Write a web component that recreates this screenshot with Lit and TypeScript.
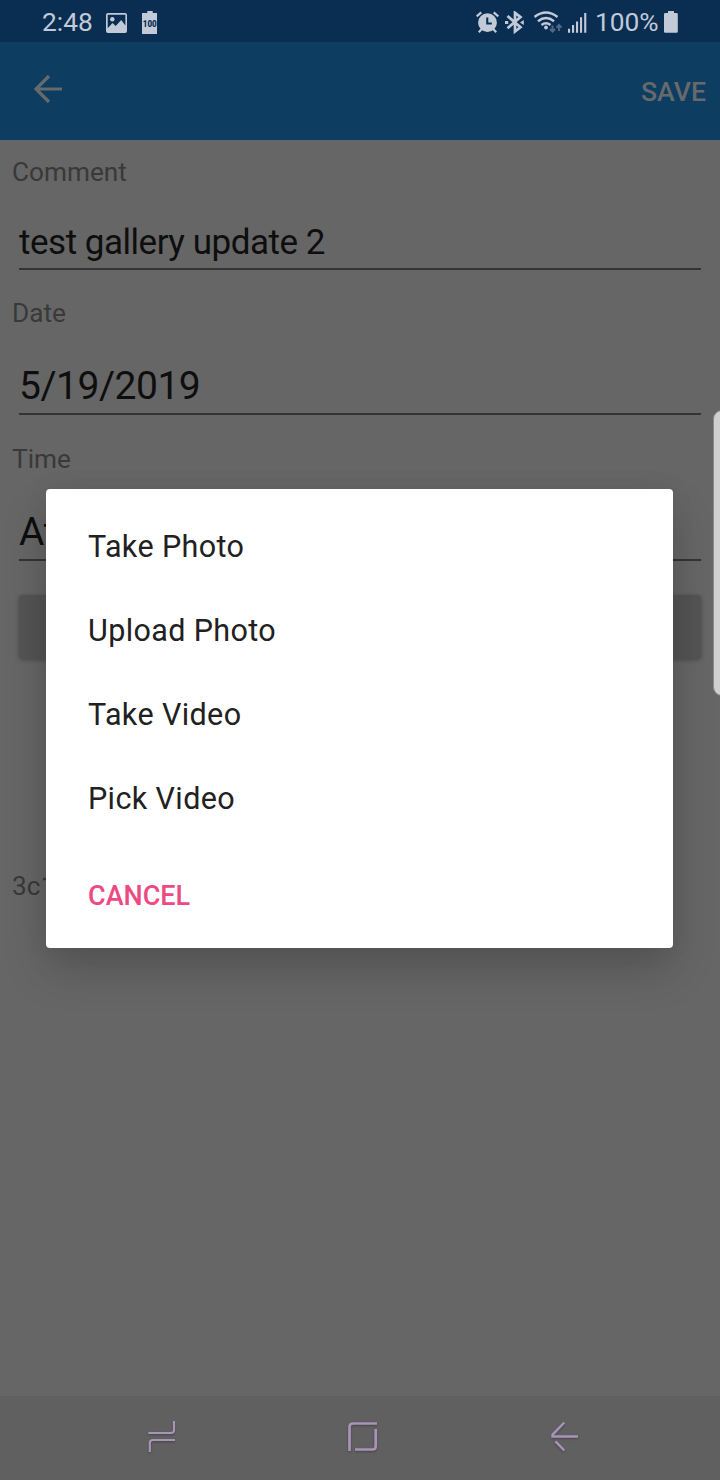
import { LitElement, html, css } from "lit";
import { customElement } from "lit/decorators.js";

@customElement("status-bar")
class StatusBar extends LitElement {
  static styles = css`
    :host { display: block; }
    .bar {
      height: 42px; box-sizing: border-box; padding: 0 41px 0 42px;
      display: flex; align-items: center; justify-content: space-between;
      background: #0a2e52; color: #c2cad8; fill: #c2cad8;
      font: 26.300px/40px Roboto, sans-serif;
    }
    .group { display: flex; align-items: center; height: 42px; padding-top: 4px; box-sizing: border-box; }
    .time { width: 63px; height: 42px; }
    .percent { width: 68px; height: 42px; }
    svg { display: block; flex: none; }
    .picture { margin-right: 14px; }
    .tiny { font: 900 9.500px Roboto, sans-serif; fill: #0a2e52; }
  `;
  render() {
    return html`<div class="bar">
      <div class="group">
        <span class="time">2:48</span>
        <svg class="picture" width="23" height="22" viewBox="0 0 23 22">
          <path fill-rule="evenodd" d="M3 1h17a2 2 0 0 1 2 2v16a2 2 0 0 1-2 2H3a2 2 0 0 1-2-2V3a2 2 0 0 1 2-2zm-.3 1.800v13.500l4.800-5.300 3.200 3 5.500-6 4.200 5.500V2.800z"/>
          <circle cx="7.300" cy="7.300" r="2.200"/>
        </svg>
        <svg width="16" height="24" viewBox="0 0 16 24">
          <path d="M5.300 0h5.400v2h4.300v21H0V2h5.300z"/>
          <text class="tiny" x="0.800" y="15.800" textLength="14" lengthAdjust="spacingAndGlyphs">100</text>
        </svg>
      </div>
      <div class="group">
        <svg width="29" height="24" viewBox="476 10 29 24">
          <path fill-rule="evenodd" d="M487.500 12.300a9.400 9.400 0 1 1 0 18.800a9.400 9.400 0 0 1 0-18.800zm-1.300 4.200v7h5.600v-2h-3.500v-5z"/>
          <path fill="none" stroke="#c2cad8" stroke-width="2.200" d="M476.700 15.300l4.600-3.900M498.300 15.300l-4.600-3.900M481.800 28l-3 3.200M493.200 28l3 3.200"/>
        </svg>
        <svg width="29" height="24" viewBox="505 10 29 24">
          <path fill="none" stroke="#c2cad8" stroke-width="2.700" d="M507.500 15L520.500 26.200l-5.500 4.300V11.800l5.500 4.300L507.500 27.200"/>
          <path d="M505 20h3.200v3H505zM520 21.500l3.800-2.500v5z"/>
        </svg>
        <svg width="33" height="24" viewBox="534 10 33 24">
          <g fill="none" stroke="#c2cad8" stroke-width="2.400">
            <path d="M534.500 16q11.500-9 23 0M538 20.200q8-6.300 16 0M541.500 24q4.500-3.500 9 0"/>
          </g>
          <circle cx="546" cy="26.500" r="1.900"/>
          <path fill="none" stroke="#52698a" stroke-width="1.900" d="M552.500 24.500v6M550 28l2.500 2.700 2.500-2.700M559 30v-6M556.500 26.700l2.500-2.700 2.500 2.700"/>
        </svg>
        <svg width="28" height="24" viewBox="567 10 28 24">
          <path d="M568 27.700h2.100v4.100H568zM572 24h2.100v7.800H572zM576 20.500h2.100v11.300H576zM580 16.300h2.100v15.500H580zM584.200 12h2.100v19.800h-2.100z"/>
        </svg>
        <span class="percent">100%</span>
        <svg width="16" height="24" viewBox="0 0 16 24">
          <path d="M5 0h6v2h2.500a1.300 1.300 0 0 1 1.300 1.300V20.500a1.300 1.300 0 0 1-1.300 1.300h-11A1.300 1.300 0 0 1 1 20.500V3.300A1.300 1.300 0 0 1 2.300 2H5z"/>
        </svg>
      </div>
    </div>`;
  }
}

@customElement("app-header")
class AppHeader extends LitElement {
  static styles = css`
    :host { display: block; }
    .bar {
      height: 98px; box-sizing: border-box; padding: 0 14px 0 33px;
      display: flex; align-items: center; justify-content: space-between;
      background: #0d3d60; color: #666a6d;
      font: 500 26.700px/30px Roboto, sans-serif;
    }
    svg { display: block; margin-bottom: 4px; }
    .save { padding-top: 1px; }
  `;
  render() {
    return html`<div class="bar">
      <svg width="30" height="30" viewBox="0 0 30 30" fill="none" stroke="#666a6d" stroke-width="3.200">
        <path d="M29 15H3M16 2L3 15l13 13"/>
      </svg>
      <span class="save">SAVE</span>
    </div>`;
  }
}

@customElement("form-field")
class FormField extends LitElement {
  static properties = { label: {}, value: {}, large: { type: Boolean } };
  declare label: string;
  declare value: string;
  declare large: boolean;
  static styles = css`
    :host { display: block; font-family: Roboto, sans-serif; }
    .label { font-size: 26.200px; line-height: 30px; color: #393939; padding-left: 12px; }
    .value {
      margin: 30px 19px 0; height: 53px; box-sizing: border-box;
      border-bottom: 2px solid #343434; color: #0e0e0e;
      font-size: 35px; line-height: 51px; letter-spacing: -.48px; white-space: nowrap; overflow: hidden;
    }
    .large { height: 57px; margin-bottom: 1px; font-size: 39px; line-height: 56px; letter-spacing: -.48px; }
  `;
  render() {
    return html`<div class="label">${this.label}</div>
      <div class="value ${this.large ? "large" : ""}">${this.value}</div>`;
  }
}

@customElement("action-sheet")
class ActionSheet extends LitElement {
  static styles = css`
    :host {
      display: block; box-sizing: border-box; width: 627px; height: 459px;
      padding: 16px 42px 0; background: #fff; border-radius: 4px;
      box-shadow: 0 22px 44px rgba(0, 0, 0, .18), 0 0 26px rgba(0, 0, 0, .06);
      font-family: Roboto, sans-serif;
    }
    .item { height: 84px; line-height: 84px; font-size: 30.500px; letter-spacing: .38px; color: #212121; }
    .cancel { margin-top: 24px; line-height: 62px; font-size: 27px; font-weight: 500; color: #ec4a82; }
  `;
  render() {
    const items = ["Take Photo", "Upload Photo", "Take Video", "Pick Video"];
    return html`${items.map((t) => html`<div class="item">${t}</div>`)}
      <div class="cancel">CANCEL</div>`;
  }
}

@customElement("nav-bar")
class NavBar extends LitElement {
  static styles = css`
    :host { display: block; }
    .bar {
      height: 84px; box-sizing: border-box; background: #606060; padding: 0 140px 4px 146px;
      display: flex; align-items: center; justify-content: space-between;
    }
    svg { display: block; fill: none; stroke: #a993b9; stroke-width: 2.200; filter: drop-shadow(0 1px 1px rgba(0, 0, 0, .3)); }
    .home { stroke-width: 2.700; }
    .back { stroke-width: 2.500; }
  `;
  render() {
    return html`<div class="bar">
      <svg width="32" height="36" viewBox="146 1418 32 36"><path d="M148.300 1433H171q3 0 3-3v-9M175 1440H153q-3.200 0-3.200 3v9"/></svg>
      <svg class="home" width="34" height="36" viewBox="347 1418 34 36"><path d="M377 1423.500H353q-3.500 0-3.500 3.500v24M355 1449.500h17.500q3.200 0 3.200-3.200V1429"/></svg>
      <svg class="back" width="30" height="36" viewBox="550 1418 30 36"><path d="M578 1436.600H552.500v-1.800L564.300 1422.500M555.500 1441.300l8.800 9.200"/></svg>
    </div>`;
  }
}

@customElement("app-root")
class AppRoot extends LitElement {
  static styles = css`
    :host { display: block; }
    .screen {
      position: relative; width: 720px; height: 1480px; overflow: hidden;
      display: flex; flex-direction: column; background: #666; font-family: Roboto, sans-serif;
    }
    .form {
      flex: 1; display: flex; flex-direction: column; padding-top: 16px; gap: 28px;
      border-top: 1px solid #5d666d;
    }
    .button {
      height: 64px; margin: 5px 19px 0; border-radius: 4px; background: #545454;
      box-shadow: 0 1px 4px rgba(0, 0, 0, .28);
    }
    .note { margin: 184px 0 0 12px; font-size: 26.200px; line-height: 30px; color: #393939; }
    .sheet { position: absolute; left: 46px; top: 489px; }
    .edge {
      position: absolute; left: 713px; top: 410px; width: 20px; height: 286px; box-sizing: border-box;
      border: 1px solid #8b8b8b; border-radius: 9px; background: #d0d0d0;
    }
  `;
  render() {
    return html`<div class="screen">
      <status-bar></status-bar>
      <app-header></app-header>
      <div class="form">
        <form-field label="Comment" value="test gallery update 2"></form-field>
        <form-field label="Date" value="5/19/2019" large></form-field>
        <form-field label="Time" value="At" large></form-field>
        <div class="button"></div>
        <div class="note">3c1</div>
      </div>
      <nav-bar></nav-bar>
      <action-sheet class="sheet"></action-sheet>
      <div class="edge"></div>
    </div>`;
  }
}
